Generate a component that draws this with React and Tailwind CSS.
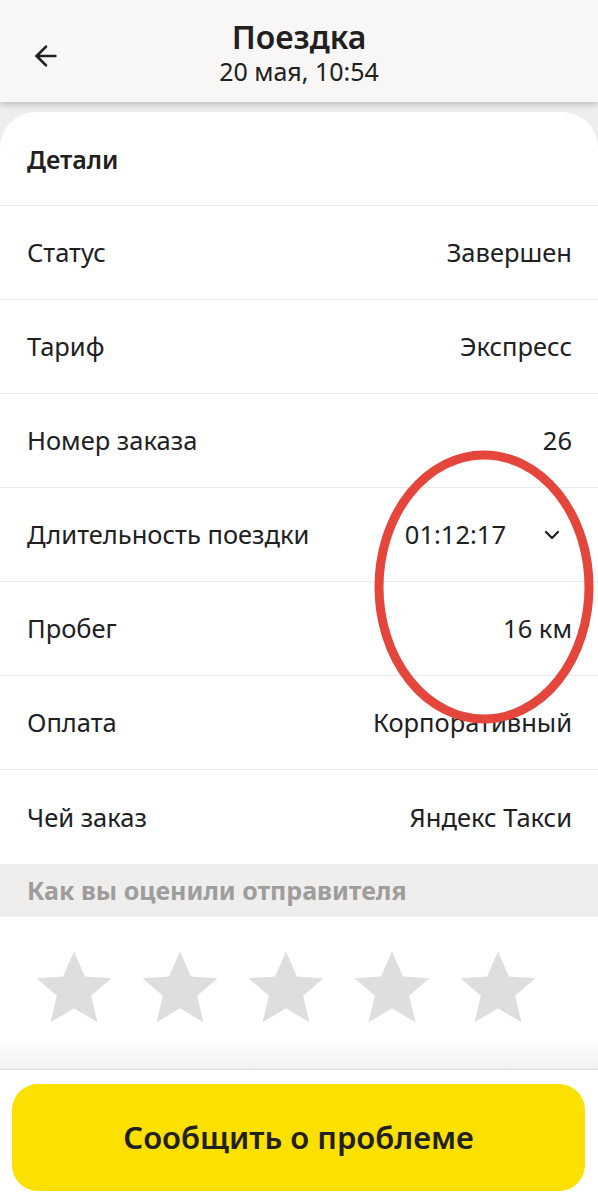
import { ArrowLeft, ChevronDown } from 'lucide-react'

const rows = [
  { label: 'Статус', value: 'Завершен' },
  { label: 'Тариф', value: 'Экспресс' },
  { label: 'Номер заказа', value: '26' },
  { label: 'Длительность поездки', value: '01:12:17', expandable: true },
  { label: 'Пробег', value: '16 км' },
  { label: 'Оплата', value: 'Корпоративный' },
  { label: 'Чей заказ', value: 'Яндекс Такси' },
]

function Star() {
  return (
    <svg viewBox="0 0 24 24" className="w-[84px] h-[84px]" fill="#dfdedc">
      <path d="M12 1.5l3.1 7.2 7.6.5-5.8 5 1.8 7.6L12 17.8l-6.7 4 1.8-7.6-5.8-5 7.6-.5z" />
    </svg>
  )
}

export default function App() {
  return (
    <div className="relative w-[598px] h-[1200px] overflow-hidden bg-[#efeeec] text-[#21201f] font-['Noto_Sans',sans-serif]">
      {/* Header */}
      <div className="relative z-10 h-[102px] bg-[#f8f7f5] shadow-[0_3px_6px_rgba(0,0,0,0.18)] flex items-center justify-center">
        <button className="absolute left-[30px] top-[40px] text-[#21201f]">
          <ArrowLeft size={32} strokeWidth={2} />
        </button>
        <div className="flex flex-col items-center pt-[2px]">
          <h1 className="text-[32px] leading-[38px] font-semibold">Поездка</h1>
          <p className="text-[25px] leading-[30px]">20 мая, 10:54</p>
        </div>
      </div>

      {/* Card */}
      <div className="mt-[10px] bg-white rounded-t-[36px]">
        <div className="h-[94px] flex items-center px-[27px] border-b border-[#e9e8e6] pt-[2px]">
          <h2 className="text-[25px] font-semibold">Детали</h2>
        </div>
        {rows.map((r, i) => (
          <div
            key={r.label}
            className={
              'h-[94px] flex items-center justify-between pl-[27px] text-[25.5px] ' +
              (i < rows.length - 1 ? 'border-b border-[#e9e8e6] ' : '') +
              (r.expandable ? 'pr-[34px]' : 'pr-[26px]')
            }
          >
            <span>{r.label}</span>
            {r.expandable ? (
              <span className="flex items-center gap-[34px]">
                <span>{r.value}</span>
                <ChevronDown size={24} strokeWidth={2.2} />
              </span>
            ) : (
              <span>{r.value}</span>
            )}
          </div>
        ))}

        {/* Rating */}
        <div className="h-[53px] bg-[#efeeec] flex items-center px-[27px]">
          <span className="text-[25px] font-bold text-[#9e9d9b]">Как вы оценили отправителя</span>
        </div>
        <div className="h-[153px] bg-gradient-to-b from-white from-80% to-[#f1f1f1] border-b border-[#dedddb]">
          <div className="flex gap-[22px] pl-[32px] pt-[29px]">
            <Star />
            <Star />
            <Star />
            <Star />
            <Star />
          </div>
        </div>
      </div>

      {/* Bottom bar */}
      <div className="bg-white px-[12px] pt-[14px] h-[200px]">
        <button className="w-[573px] h-[107px] rounded-[26px] bg-[#fce000] text-[31px] font-semibold text-[#21201f]">
          Сообщить о проблеме
        </button>
      </div>

      {/* Red annotation */}
      <svg className="absolute left-[372px] top-[448px] pointer-events-none" width="224" height="278" viewBox="0 0 224 278">
        <ellipse cx="112" cy="139" rx="105" ry="132" fill="none" stroke="#e5463c" strokeWidth="9" />
      </svg>
    </div>
  )
}
